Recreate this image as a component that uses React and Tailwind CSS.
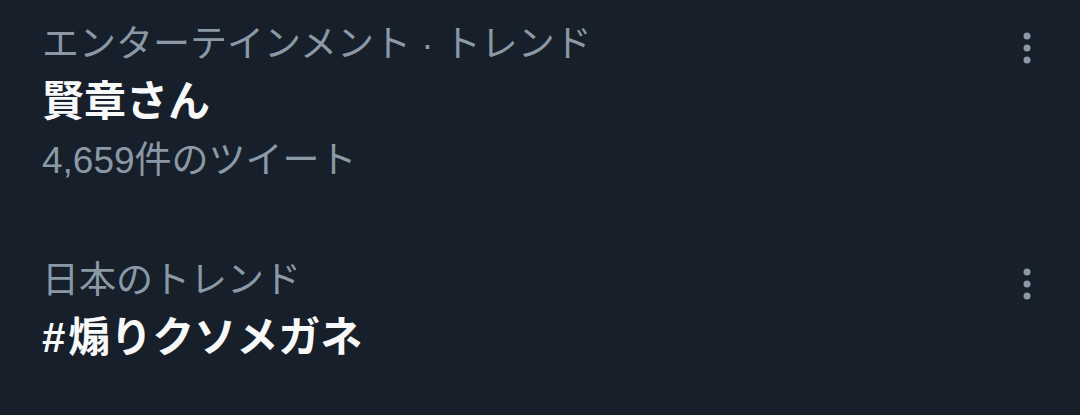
import { useState } from 'react'

const TRENDS = [
    { id: 1, category: 'エンターテインメント · トレンド', title: '賢章さん', count: '4,659件のツイート' },
    { id: 2, category: '日本のトレンド', title: '#煽りクソメガネ' },
]

function MoreIcon() {
    return (
        <svg width="12" height="34" viewBox="0 0 12 34" className="text-[#8b98a5]">
            <circle cx="6" cy="5" r="3.5" fill="currentColor" />
            <circle cx="6" cy="17" r="3.5" fill="currentColor" />
            <circle cx="6" cy="29" r="3.5" fill="currentColor" />
        </svg>
    )
}

function TrendItem({ trend }) {
    return (
        <div className="flex items-start justify-between pl-[42px] pr-[47px]">
            <div className="flex flex-col">
                <span className="text-[37px] leading-[44px] text-[#8b98a5]">{trend.category}</span>
                <span className="mt-[7px] text-[42px] leading-[56px] font-bold text-[#f7f9f9]">
                    {trend.title.startsWith('#') ? (
                        <>
                            <span className="mr-[3px]">#</span>
                            {trend.title.slice(1)}
                        </>
                    ) : (
                        trend.title
                    )}
                </span>
                {trend.count && (
                    <span className="mt-[9px] text-[37px] leading-[44px] text-[#8b98a5]">{trend.count}</span>
                )}
            </div>
            <div className="mt-[8px]">
                <MoreIcon />
            </div>
        </div>
    )
}

export default function App() {
    const [items] = useState(TRENDS)

    return (
        <div
            className="w-[1080px] h-[415px] overflow-hidden bg-[#161f2a] pt-[23px]"
            style={{ fontFamily: '"Liberation Sans", "Noto Sans CJK JP", sans-serif' }}
        >
            <div className="flex flex-col gap-[76px]">
                {items.map((t) => (
                    <TrendItem key={t.id} trend={t} />
                ))}
            </div>
        </div>
    )
}
